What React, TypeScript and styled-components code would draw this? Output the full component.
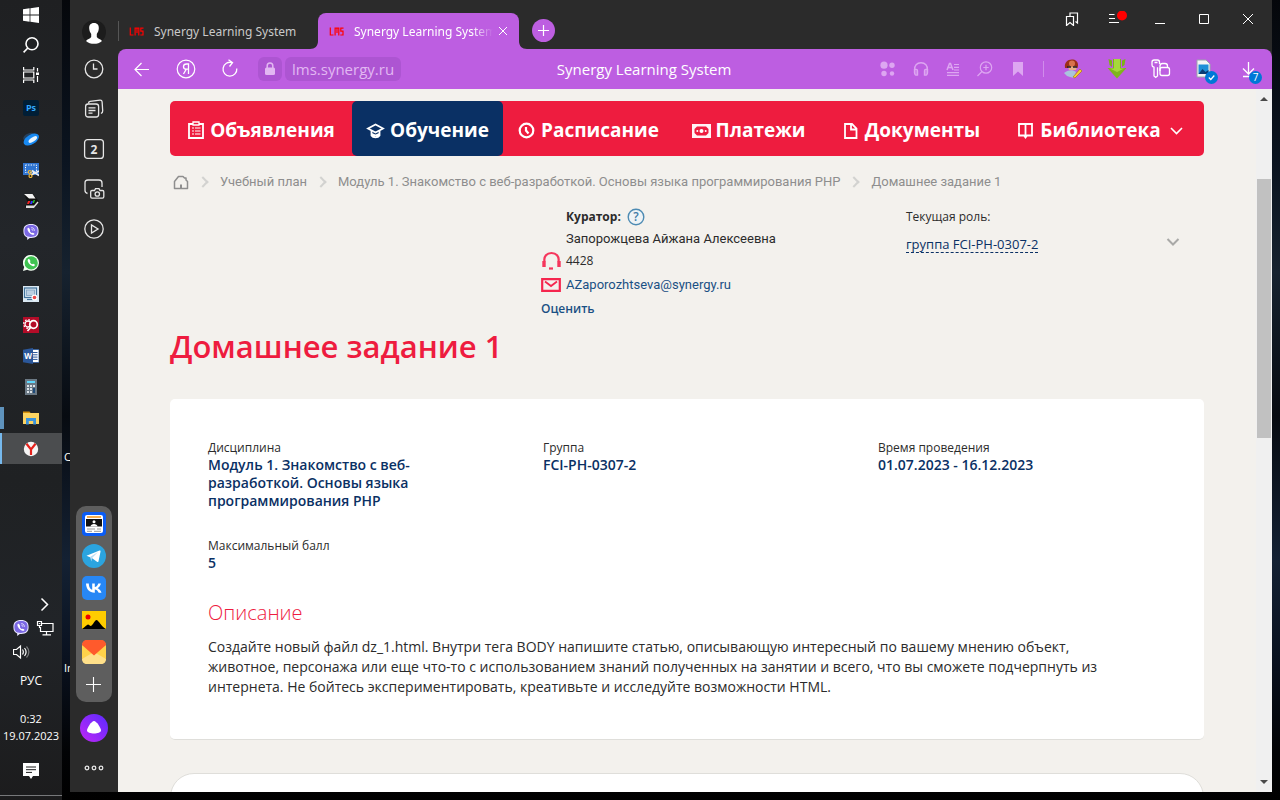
import React from "react";
import styled, { createGlobalStyle, css } from "styled-components";

const chrome = `"Noto Sans", "Open Sans", sans-serif`;
const ui = `"Open Sans", "Noto Sans", sans-serif`;
const compact = `Roboto, "Open Sans", sans-serif`;

const GlobalStyle = createGlobalStyle`
  *, *::before, *::after { box-sizing: border-box; }
  html, body { margin: 0; padding: 0; background: #05070b; }
  body { font-family: ${ui}; color: #2b2b2b; }
  button { font: inherit; color: inherit; background: none; border: 0; padding: 0; margin: 0; }
  a { color: inherit; text-decoration: none; }
  h1, h2, p, dl, dt, dd, ul, ol { margin: 0; padding: 0; font-weight: inherit; list-style: none; }
  svg { display: block; flex: none; }
`;

/* ---------- desktop ---------- */

const Desktop = styled.div`
  display: flex;
  height: 100vh;
  min-height: 640px;
  background: linear-gradient(#05070b 0%, #0b1420 20%, #16222f 34%, #070b11 52%, #142133 70%, #0a1220 82%, #020305 94%, #000 100%);
  overflow: hidden;
`;

const Taskbar = styled.aside`
  display: flex;
  flex-direction: column;
  flex: none;
  width: 62px;
  background: linear-gradient(#1f2022, #23262a 30%, #1f2123 60%, #212428 78%, #1c1c1d);
  color: #fff;
`;

const TaskGroup = styled.div<{ $gap?: number }>`
  display: flex;
  flex-direction: column;
  margin-bottom: ${(p) => p.$gap ?? 0}px;
`;

const TaskButton = styled.button<{ $state?: "open" | "active"; $small?: boolean }>`
  display: flex;
  align-items: center;
  justify-content: center;
  height: ${(p) => (p.$small ? 30 : 31)}px;
  ${(p) => p.$state === "open" && css`
    background: linear-gradient(to right, #5f93bd 4px, transparent 4px) 0 50% / 100% 22px no-repeat;
  `}
  ${(p) => p.$state === "active" && css`
    background: linear-gradient(to right, #76b9ed 2px, #4b4d4f 2px);
  `}
`;

const Tray = styled.div`
  display: flex;
  flex-direction: column;
  margin-top: auto;
  height: 204px;
  border-bottom: 1px solid #77787a;
  margin-bottom: 4px;
`;

const TrayRow = styled.div`
  display: grid;
  grid-template-columns: 16px 18px;
  column-gap: 7px;
  height: 24px;
  padding-left: 13px;
  align-items: center;
`;

const TrayText = styled.button`
  font-size: 11px;
  line-height: 17px;
  text-align: center;
  white-space: nowrap;
`;

const Clock = styled(TrayText)`
  margin-top: 21px;
  span { display: block; }
`;

const Language = styled(TrayText)`
  margin-top: 8px;
  font-size: 12px;
`;

const Notice = styled.button`
  display: flex;
  justify-content: center;
  margin-top: 19px;
`;

const Wallpaper = styled.div`
  position: relative;
  flex: none;
  width: 8px;
  overflow: hidden;
  color: #fff;
  font-size: 11px;
`;

const ShortcutLabel = styled.span<{ $y: number }>`
  position: absolute;
  left: 2px;
  top: ${(p) => p.$y}px;
  white-space: nowrap;
`;

const BrowserWindow = styled.div`
  display: grid;
  grid-template-columns: 48px minmax(0, 1fr);
  flex: 1;
  min-width: 0;
  margin: 0 8px 8px 0;
  background: #2b2b2b;
`;

/* ---------- browser side panel ---------- */

const SidePanel = styled.aside`
  display: flex;
  flex-direction: column;
  align-items: center;
  padding: 20px 0 12px;
`;

const SideButton = styled.button`
  display: flex;
  align-items: center;
  justify-content: center;
  width: 36px;
  height: 40px;
  color: #e6e6e6;
`;

const Avatar = styled.button`
  width: 24px;
  height: 24px;
  margin-bottom: 5px;
`;

const Dock = styled.div`
  display: flex;
  flex-direction: column;
  align-items: center;
  gap: 8px;
  width: 36px;
  margin-top: auto;
  padding: 6px 0;
  border-radius: 10px;
  background: #5e5e5e;
  color: #fff;
`;

const Alice = styled.button`
  width: 28px;
  height: 28px;
  margin: 12px 0 14px;
`;

const More = styled.button`
  height: 24px;
`;

/* ---------- browser main column ---------- */

const Main = styled.div`
  display: flex;
  flex-direction: column;
  min-width: 0;
  min-height: 0;
`;

const TabBar = styled.header`
  display: flex;
  align-items: flex-end;
  height: 49px;
  flex: none;
  color: #fff;
`;

const Tab = styled.div<{ $active?: boolean }>`
  position: relative;
  display: flex;
  align-items: center;
  width: ${(p) => (p.$active ? 201 : 200)}px;
  height: 36px;
  padding: 0 11px;
  gap: 10px;
  border-radius: 8px 8px 0 0;
  background: ${(p) => (p.$active ? "#bd5ee1" : "transparent")};
  color: ${(p) => (p.$active ? "#fff" : "#c9c9c9")};
`;

const TabDivider = styled.div`
  width: 1px;
  height: 20px;
  margin: 0 -1px 8px 0;
  background: #565656;
`;

const Flare = styled.svg<{ $right?: boolean }>`
  position: absolute;
  bottom: 0;
  ${(p) => (p.$right ? "left: 100%; transform: scaleX(-1);" : "right: 100%;")}
`;

const TabTitle = styled.button<{ $fade?: boolean }>`
  flex: 1;
  overflow: hidden;
  text-align: left;
  white-space: nowrap;
  font-family: ${chrome};
  font-size: 12px;
  line-height: 20px;
  padding-top: 1px;
  ${(p) => p.$fade && css`mask-image: linear-gradient(to right, #000 85%, transparent 100%);`}
`;

const TabClose = styled.button`
  margin-left: -5px;
`;

const NewTab = styled.button`
  display: flex;
  align-items: center;
  justify-content: center;
  width: 23px;
  height: 23px;
  margin: 0 0 7px 13px;
  border-radius: 50%;
  background: #bd5ee1;
`;

const WindowControls = styled.div`
  display: flex;
  align-items: center;
  align-self: flex-start;
  height: 38px;
  margin-left: auto;
  padding-right: 2px;
`;

const ControlButton = styled.button`
  display: flex;
  align-items: center;
  justify-content: center;
  width: 44px;
  height: 38px;
`;

const Toolbar = styled.div`
  display: flex;
  align-items: center;
  flex: none;
  height: 40px;
  padding: 0 1px 0 14px;
  border-radius: 8px 8px 0 0;
  background: #bd5ee1;
  color: #fff;
`;

const NavButtons = styled.div`
  display: flex;
  align-items: center;
  gap: 24px;
  margin-right: 18px;
`;

const Chip = styled.button`
  display: flex;
  align-items: center;
  justify-content: center;
  height: 24px;
  min-width: 24px;
  margin-right: 3px;
  padding: 0 7px;
  border-radius: 6px;
  background: #ad55d2;
  color: #e2b8f2;
  font-size: 15px;
  line-height: 24px;
`;

const PageTitle = styled.div`
  flex: 1;
  text-align: center;
  white-space: nowrap;
  overflow: hidden;
  font-size: 15px;
  line-height: 24px;
  padding-left: 4px;
`;

const PageTools = styled.div`
  display: flex;
  align-items: center;
  gap: 17px;
  color: #dda6f1;
`;

const ToolDivider = styled.div`
  width: 1px;
  height: 16px;
  margin-right: 7px;
  background: #d08ceb;
`;

const Extensions = styled.div`
  display: flex;
  align-items: center;
  color: #fff;
`;

const ExtensionButton = styled.button`
  position: relative;
  display: flex;
  align-items: center;
  justify-content: center;
  width: 44px;
  height: 30px;
`;

const Badge = styled.span`
  position: absolute;
  right: 9px;
  bottom: 0;
  display: flex;
  align-items: center;
  justify-content: center;
  width: 13px;
  height: 13px;
  border-radius: 50%;
  background: #0078d7;
  color: #fff;
  font-size: 10px;
  line-height: 13px;
`;

const Viewport = styled.div`
  display: flex;
  flex: 1;
  min-height: 0;
  background: #f3f1ed;
`;

const Page = styled.main`
  flex: 1;
  min-width: 0;
  padding: 12px 52px 0;
  overflow: hidden;
`;

const ScrollTrack = styled.div`
  display: flex;
  flex-direction: column;
  align-items: center;
  width: 16px;
  padding: 7px 0;
  background: #f0f0f0;
`;

const ScrollThumb = styled.div`
  width: 14px;
  height: 259px;
  margin: 77px 0 auto;
  background: #c1c1c1;
`;

/* ---------- page ---------- */

const Menu = styled.nav`
  display: grid;
  grid-template-columns: 182fr 151fr 171fr 149fr 176fr 205fr;
  height: 55px;
  border-radius: 5px;
  background: #ee1c3f;
`;

const MenuLink = styled.a<{ $active?: boolean }>`
  display: flex;
  align-items: center;
  justify-content: center;
  gap: 5px;
  padding-top: 2px;
  border-radius: 5px;
  background: ${(p) => (p.$active ? "#0a3064" : "transparent")};
  color: #fff;
  font-size: 19px;
  font-weight: 700;
  line-height: 28px;
  white-space: nowrap;
`;

const Crumbs = styled.ol`
  display: flex;
  align-items: center;
  height: 20px;
  margin-top: 16px;
  padding-left: 3px;
  color: #8e8e8e;
  font-family: ${compact};
  font-size: 13px;
  line-height: 20px;
  white-space: nowrap;
`;

const Crumb = styled.li`
  display: flex;
  align-items: center;
  &:not(:last-child)::after {
    content: "";
    width: 8px;
    height: 8px;
    margin: 0 13px 0 10px;
    border: solid #d2d2d0;
    border-width: 2px 2px 0 0;
    transform: rotate(45deg);
  }
`;

const InfoRow = styled.section`
  display: grid;
  grid-template-columns: 371fr 365fr 298fr;
  height: 114px;
  margin-top: 14px;
  font-size: 12px;
  line-height: 22px;
`;

const Curator = styled.div`
  grid-column: 2;
  display: grid;
  grid-template-columns: 20px 1fr;
  grid-template-rows: 22px 22px 22px 25px 24px;
  column-gap: 5px;
  align-items: center;
  align-content: start;
  white-space: nowrap;
`;

const CuratorLabel = styled.div`
  grid-column: 2;
  display: flex;
  align-items: center;
  gap: 6px;
  font-weight: 700;
`;

const CuratorValue = styled.div`
  grid-column: 2;
  font-family: ${compact};
  font-size: 13px;
`;

const MailLink = styled.a`
  color: #1a5084;
  font-family: ${compact};
  font-size: 13px;
`;

const RateLink = styled.a`
  grid-column: 1 / -1;
  color: #1a5084;
  font-weight: 600;
`;

const Role = styled.div`
  display: grid;
  grid-template-columns: 1fr 14px;
  align-content: start;
  align-items: start;
  row-gap: 8px;
  padding-right: 24px;
`;

const RoleCaption = styled.div`
  grid-column: 1 / -1;
`;

const RoleLink = styled.a`
  justify-self: start;
  border-bottom: 1px dashed #0a3064;
  color: #0a3064;
  font-size: 13px;
  line-height: 16px;
`;

const Title = styled.h1`
  margin-top: 2px;
  color: #ee1c3f;
  font-size: 31px;
  font-weight: 600;
  line-height: 48px;
`;

const Card = styled.section`
  margin-top: 29px;
  padding: 40px 38px 42px;
  border-bottom: 1px solid #dfdeda;
  border-radius: 5px;
  background: #fff;
`;

const Facts = styled.dl`
  display: grid;
  grid-template-columns: repeat(3, 1fr);
  column-gap: 47px;
  row-gap: 27px;
`;

const FactName = styled.dt`
  color: #2b2b2b;
  font-size: 12px;
  line-height: 17px;
`;

const FactValue = styled.dd`
  max-width: 240px;
  color: #0a3064;
  font-size: 14px;
  font-weight: 600;
  line-height: 18px;
`;

const Subtitle = styled.h2`
  margin-top: 26px;
  color: #ee1c3f;
  font-size: 20px;
  font-weight: 300;
  line-height: 30px;
`;

const Description = styled.p`
  margin-top: 9px;
  padding-right: 32px;
  font-size: 14px;
  line-height: 20px;
`;

const NextCard = styled.section`
  height: 120px;
  margin-top: 33px;
  border: 1px solid #dfdeda;
  border-radius: 24px;
  background: #fff;
`;

/* ---------- icons ---------- */

type IconProps = { w?: number; h?: number; box?: string; sw?: number; children: React.ReactNode };
const Line = ({ w = 20, h = w, box, sw = 1.2, children }: IconProps) => (
  <svg width={w} height={h} viewBox={box ?? `0 0 ${w} ${h}`} fill="none" stroke="currentColor" strokeWidth={sw} aria-hidden="true">
    {children}
  </svg>
);
const Pic = ({ w = 16, h = w, box, children }: IconProps) => (
  <svg width={w} height={h} viewBox={box ?? `0 0 ${w} ${h}`} aria-hidden="true">{children}</svg>
);

const ViberIcon = () => (
  <Pic>
    <path d="M8 0C3 0 .4 2 .4 7c0 3.600 1.300 5.600 3.800 6.500V16l2.600-2.100c6 .4 8.800-1.600 8.800-6.900C15.600 2 13 0 8 0z" fill="#e9e6ff" />
    <path d="M8 1C3.600 1 1.400 2.700 1.400 7s2 5.900 6.200 5.900C12 12.900 14.600 11.500 14.600 7S12.400 1 8 1z" fill="#7b68e4" />
    <path d="M5 3.700c-1.400 1 .2 4 1.600 5.300 1.400 1.400 3.800 2.600 4.800 1.200.4-.7-1.600-2-2.200-1.300-.6.7-2.800-1.500-2.200-2.100.7-.6-1-3.500-2-3.100z" fill="#fff" />
    <path d="M8.300 3.600c2 .1 3 1.200 3.100 3.200M8.500 5.200c.8.100 1.200.6 1.300 1.400" fill="none" stroke="#fff" strokeWidth=".8" />
  </Pic>
);

const systemIcons = [
  { name: "Пуск", icon: <Pic><path d="M0 2.200 6.600 1.300V7.600H0zM7.400 1.200 16 0V7.600H7.400zM0 8.400H6.600V14.700L0 13.800zM7.400 8.400H16V16L7.400 14.800z" fill="#fff" /></Pic> },
  { name: "Поиск", icon: <Line w={16} sw={1.6}><circle cx="9" cy="6.800" r="6" /><path d="M4.800 11 .6 15.400" /></Line> },
  { name: "Представление задач", icon: <Line w={16} sw={1.2}><path d="M.6 0v3h10.200V0M.6 16v-3h10.200v3M.6 5h10.200v6H.6zM14.500 1v3.500M14.500 9v6" /><path d="M13 5.500h3v2.500h-3z" fill="#fff" stroke="none" /></Line> },
];

const appIcons: { name: string; icon: React.ReactNode; state?: "open" | "active" }[] = [
  { name: "Photoshop", icon: <Pic><rect width="16" height="16" rx="2" fill="#001e36" /><text x="8" y="11.300" textAnchor="middle" fontFamily="Open Sans" fontWeight="700" fontSize="9" fill="#31a8ff">Ps</text></Pic> },
  { name: "Яндекс Диск", icon: <Pic><ellipse cx="6.500" cy="6" rx="6.500" ry="3.800" transform="rotate(-20 6.500 6)" fill="#24405e" /><ellipse cx="8.300" cy="8.500" rx="8.500" ry="4.800" transform="rotate(-32 8.300 8.500)" fill="#1789f2" /><ellipse cx="9.800" cy="8.500" rx="5" ry="2" transform="rotate(-35 9.800 8.500)" fill="#e8f5ff" /></Pic> },
  { name: "Ножницы", icon: <Pic><rect width="16" height="12" y="1" fill="#2f74d0" /><rect x="2.500" y="3" width="11" height="7.500" fill="none" stroke="#fff" strokeDasharray="1.300 1.300" /><path d="m8 13 8-4M9 8.500l7 5" stroke="#e8edf3" strokeWidth="1.700" /><circle cx="6.800" cy="10" r="1.500" fill="none" stroke="#f2b632" strokeWidth="1.200" /><circle cx="7.500" cy="14" r="1.500" fill="none" stroke="#f2b632" strokeWidth="1.200" /></Pic> },
  { name: "Сканер", icon: <Pic><path d="M1 1h9l6 7.500-5 6.500H3l-1-2 3-3z" fill="#111" /><path d="M1 1h8.500l3 4.500H6z" fill="#f2f2f2" /><path d="M3 12.500h8l3.500-4 1 1L11 15H3z" fill="#ddd" /><path d="M5 8h2.500L6 11H4z" fill="#e22" /><path d="M8 8h2l-1 3H7z" fill="#33f" /><path d="M10.500 7H12l-1 3H9.500z" fill="#2c2" /></Pic> },
  { name: "Viber", icon: <ViberIcon /> },
  { name: "WhatsApp", icon: <Pic><path d="M8.200 0A7.700 7.700 0 0 1 8 15.700a8 8 0 0 1-3.700-.9L0 16l1.200-4A7.800 7.800 0 0 1 8.200 0z" fill="#f4fff4" /><circle cx="8.200" cy="7.900" r="6.600" fill="#3fc351" /><path d="M5.200 4.200c-1.300 1 0 3.500 1.500 5s3.800 2.700 5 1.400c.8-1-1.500-2.200-2-1.600-.7.800-3.200-1.600-2.500-2.300.8-.7-1-3.100-2-2.500z" fill="#fff" /></Pic> },
  { name: "Запись экрана", icon: <Pic><rect width="16" height="16" fill="#dbe9f3" /><rect x="1.500" y="2" width="12" height="9.500" fill="none" stroke="#41729b" strokeWidth="1.200" /><rect x="3.500" y="4" width="8" height="5.500" fill="#bcd0e2" stroke="#7d9fbd" strokeWidth=".8" /><path d="M4 13.500h6" stroke="#41729b" strokeWidth="1.200" /><circle cx="11.500" cy="11.500" r="3" fill="#fff" /><circle cx="11.500" cy="11.500" r="1.800" fill="#e84848" /></Pic> },
  { name: "Настройка", icon: <Pic><rect width="16" height="16" fill="#b30c28" /><circle cx="5" cy="7" r="3" fill="none" stroke="#fff" strokeWidth="1.300" /><circle cx="5" cy="7" r="4.300" fill="none" stroke="#fff" strokeWidth="1.400" strokeDasharray="1.500 1.850" /><circle cx="10.500" cy="7.500" r="3.800" fill="#b30c28" stroke="#fff" strokeWidth="1.700" /><path d="m8 10-3.500 4" stroke="#fff" strokeWidth="1.700" /></Pic> },
  { name: "Word", icon: <Pic><rect x="8" y="1.500" width="8" height="13" fill="#fff" stroke="#2b579a" strokeWidth=".8" /><path d="M10 4.500h4.500M10 6.800h4.500M10 9.100h4.500M10 11.400h4.500" stroke="#2b579a" /><path d="M0 1.700 10 0v16L0 14.300z" fill="#2b579a" /><text x="5" y="11" textAnchor="middle" fontFamily="Open Sans" fontWeight="700" fontSize="8" fill="#fff">W</text></Pic> },
  { name: "Калькулятор", icon: <Pic><rect x="2" width="12" height="16" fill="#6b7985" /><rect x="4" y="2" width="8" height="2" fill="#5fd7fb" /><g fill="#dbe2e8"><path d="M4 6h2v2H4zM7 6h2v2H7zM10 6h2v2h-2zM4 9h2v2H4zM7 9h2v2H7zM4 12h2v2H4zM7 12h2v2H7z" /></g><path d="M10 9h2v5h-2z" fill="#1f4a78" /></Pic> },
  { name: "Проводник", state: "open", icon: <Pic><path d="M0 1.500h6.500l1.500 2H0z" fill="#d7920b" /><path d="M0 3h16v11H0z" fill="#fcd462" /><path d="M3 8h10v6.500h-2.800V11H5.800v3.500H3z" fill="#3b93dc" /></Pic> },
  { name: "Яндекс Браузер", state: "active", icon: <Pic><circle cx="8" cy="8" r="7.200" fill="#f5f5f5" /><path d="M3.500 2.800 8 8.500l4.500-5.700M8 8v6" fill="none" stroke="#e3211c" strokeWidth="2.200" /></Pic> },
];

const sideIcons = [
  { name: "История", icon: <Line w={20} sw={1.3}><circle cx="10" cy="10" r="8.800" /><path d="M9.500 4.500v5.500h4" /></Line> },
  { name: "Коллекции", icon: <Line w={20} sw={1.3}><rect x="1.600" y="5" width="13" height="13" rx="2.500" /><path d="M4.500 4.500C4.500 3 5 2.500 6 2.400l10-1.200c1.500-.1 2 .6 2.100 1.600l.6 9c.1 1.500-.6 2.300-1.800 2.700M4.500 8.800h7M4.500 11.500h7M4.500 14.200h4" /></Line> },
  { name: "Вкладки", icon: <svg width="22" height="22" viewBox="0 0 22 22" aria-hidden="true"><rect x="1.600" y="1.600" width="18.800" height="18.800" rx="3" fill="none" stroke="currentColor" strokeWidth="1.300" /><text x="11" y="15.500" textAnchor="middle" fontFamily="Open Sans" fontWeight="700" fontSize="12" fill="currentColor">2</text></svg> },
  { name: "Скриншот", icon: <Line w={22} sw={1.300}><path d="M4.500 15.500C2.500 15 2 14.500 2 12.500V5c0-2 .8-3 3-3h11c2.200 0 3 1 3 3v4" /><path d="M9 12.500h2.500l1-1.800h3.500l1 1.800h2.500c.9 0 1.300.5 1.300 1.300v5c0 .8-.4 1.300-1.300 1.300H9c-.9 0-1.300-.5-1.300-1.300v-5c0-.8.4-1.300 1.300-1.300z" /><circle cx="14.300" cy="16" r="2.200" /></Line> },
  { name: "Видео", icon: <Line w={20} sw={1.3}><circle cx="10" cy="10" r="9.200" /><path d="M7.500 6v8l6.500-4z" /></Line> },
];

const dockIcons = [
  { name: "Новости", icon: <Pic w={24}><rect width="24" height="24" rx="4" fill="#0a5cf5" /><rect x="3" y="3" width="18" height="18" rx="2" fill="#fff" /><path d="M5 5h14" stroke="#f59a23" strokeWidth="1.600" /><rect x="4" y="7" width="16" height="7.500" fill="#111" /><circle cx="12" cy="9.800" r="1.500" fill="#fff" /><path d="M8.500 14.500c0-3.500 7-3.500 7 0z" fill="#fff" /><path d="M5 17h8M15 17h4M5 19.300h5M12 19.300h7" stroke="#999" /></Pic> },
  { name: "Telegram", icon: <Pic w={24}><circle cx="12" cy="12" r="12" fill="#2ba4df" /><path d="m4.500 11.800 13-5.300c.8-.2 1.200.2 1 1.200l-2 9.500c-.2.900-.8 1-1.500.6l-5.200-3.900z" fill="#fff" /><path d="m8 13 8-5-6 6-.6 3.500z" fill="#b9ddf3" /></Pic> },
  { name: "ВКонтакте", icon: <Pic w={24}><rect width="24" height="24" rx="5" fill="#2787f5" /><path d="M12.700 16.800c-5.400 0-8.500-3.500-8.700-9.200h2.800c.1 4.100 2 5.900 3.400 6.200V7.600h2.600v3.500c1.500-.1 3-1.700 3.500-3.500h2.600c-.4 2.300-2.100 4-3.300 4.700 1.200.6 3.200 2.100 3.900 4.500h-2.800c-.6-1.800-2.100-3.200-3.900-3.400v3.400z" fill="#fff" /></Pic> },
  { name: "Картинки", icon: <Pic w={24}><path d="M0 3h24v18H0z" fill="#fc0" /><path d="M0 21c3-2 5-4.500 6-4.500s2 1.700 3 1.500c1.500-.5 4-6 5.500-6 2 0 5 7 9.500 9z" fill="#000" /><circle cx="6" cy="9" r="2.500" fill="#e00" /></Pic> },
  { name: "Почта", icon: <Pic w={24}><rect width="24" height="24" rx="6" fill="#ffd24a" /><path d="M0 19 12 12l12 7c0 3-2 5-5 5H5c-3 0-5-2-5-5z" fill="#ffe08a" /><path d="M0 5c0-3 2-5 5-5h14c3 0 5 2 5 5L12 15.500z" fill="#ff5a2c" /></Pic> },
  { name: "Добавить", icon: <Line w={24} sw={1.1}><path d="M11.500 5v15M4 12.500h15" /></Line> },
];

const LmsIcon = () => (
  <svg width="15" height="9" viewBox="0 0 15 9" fill="none" stroke="#f00" strokeWidth="1.200" aria-hidden="true">
    <path d="M1.300.5v7.500h3.200M6.100 8.500V1.100h3.700v7.400M8 1.500v4.500M14.500 1.100h-2.700v3h2.200V8h-2.700" />
  </svg>
);

const pageTools = [
  <Pic key="a" w={16}><g fill="currentColor"><circle cx="4" cy="4.200" r="3.600" /><circle cx="12" cy="4.200" r="2.700" /><circle cx="4" cy="12.500" r="2.700" /><circle cx="12" cy="12.500" r="2.200" /></g></Pic>,
  <Line key="b" w={16} h={18} sw={1.400}><path d="M1.700 10C1 5.500 4 2.700 8 2.700s7 2.800 6.300 7.300" /><path d="M1.500 9.500c2.500-.5 3 0 3 1.500v4c-2 .5-3-.5-3-2.500zM14.500 9.500c-2.500-.5-3 0-3 1.500v4c2 .5 3-.5 3-2.500z" fill="currentColor" fillOpacity=".5" /></Line>,
  <Line key="c" w={14} sw={1.200}><path d="M8 2.500h5M8 5.300h5M8 8h5M1 10.700h12M1 13.300h12" /><path d="M1 8 3.500 1.500h1L7 8M2.500 5.500h3.500" strokeWidth="1.500" /></Line>,
  <Line key="d" w={16} sw={1.200}><circle cx="9" cy="6.500" r="5.700" /><path d="m5 10.500-4.500 4.500M9 3.800v5.400M6.300 6.500h5.400" /></Line>,
  <Pic key="e" w={16}><path d="M3 1h10v14l-5-4.500L3 15z" fill="currentColor" /></Pic>,
];

const extensions: { name: string; icon: React.ReactNode; badge?: React.ReactNode }[] = [
  { name: "Редактор", icon: <Pic w={20}><path d="M2 9c-1-6 3-9 8-8.500 4 .5 6 4 4.500 8.500z" fill="#9c2e17" /><circle cx="9" cy="4.500" r="3" fill="#d8734c" /><path d="M5 7.500h9l-1 3.500H6z" fill="#e6b088" /><path d="M4 8h4M10 8h4" stroke="#222" strokeWidth="1.500" /><path d="M1 14c3-3 9-4 12-1l-2 6-4-1-3-1z" fill="#a9c4dc" /><path d="m10 18 7-8 2 2-7 7z" fill="#f6d02f" stroke="#9a6b12" strokeWidth=".6" /></Pic> },
  { name: "Скачать", icon: <Pic w={20}><path d="M6 0h8v9h5.500L10 19.500.5 9H6z" fill="#7fb51d" /><path d="M1.500 0 5 1.500V8L2.500 6zM18.500 0 15 1.500V8l2.500-2z" fill="#7ab317" /><path d="M7 0h6v9.500h4L10 13 3 9.500h4z" fill="#a6d83c" /></Pic> },
  { name: "Пароли", icon: <Line w={20} sw={1.300}><path d="M8.500 5V3.200C8.500 1.800 7.800 1 6.500 1H3.200C1.800 1 1 1.800 1 3.200V6c0 1.300.8 2 2 2.200V17l1.700 1.500L6.500 17V8.300M3.500 3.500h3" /><rect x="9" y="8.500" width="9.500" height="8" rx="2" /><path d="M9 12V7c0-1.600.8-2.500 2.500-2.500h2.500c1.600 0 2.500.9 2.500 2.500v1.500" /></Line> },
  { name: "Файл", icon: <Pic w={20}><path d="M2 1h9l4 4v13H2z" fill="#f5f5f5" stroke="#9aa5ad" /><rect x="3.500" y="5.500" width="10" height="9.500" fill="#1e90d8" /><path d="m3.500 15 4-5 3 3 3-2v4z" fill="#0b3c74" /></Pic>, badge: <svg width="7" height="7" viewBox="0 0 7 7"><path d="m.8 3.500 2 2 3.500-4" fill="none" stroke="#fff" strokeWidth="1.200" /></svg> },
  { name: "Загрузки", icon: <Line w={18} sw={1.300}><path d="M8.500 2v12M3 8.500 8.500 14l5.500-5.500M3 16.500h7" /></Line>, badge: "7" },
];

const menu = [
  { label: "Объявления", icon: <Line w={18} sw={1.800}><path d="M2 3h14v14H2z" /><path d="M6 1h6v3H6z" fill="#ee1c3f" strokeWidth="1.300" /><path d="M5 7h2M8 7h5.500M5 10h2M8 10h5.500M5 13h2M8 13h5.500" strokeWidth="1.200" /></Line> },
  { label: "Обучение", active: true, icon: <Line w={19} h={18} sw={1.800}><path d="m2 7.500 7.500-4 7.500 4-7.500 4z" /><path d="M5.500 9.500v5c1.500 2.500 6.500 2.500 8 0v-5M6 13c2 1.500 5 1.500 7 0" /></Line> },
  { label: "Расписание", icon: <Line w={18} sw={2.2}><circle cx="8.500" cy="9.500" r="6.800" /><path d="M8 6V9.500l2.500 3" /></Line> },
  { label: "Платежи", icon: <Pic w={19} h={18}><path d="M0 3h19v14H0z" fill="#fff" opacity=".95" /><path d="M2.500 8 5 5.500h9L16.500 8v4L14 14.500H5L2.500 12z" fill="#ee1c3f" /><circle cx="9.500" cy="10" r="2" fill="#fff" /><circle cx="5.300" cy="10" r="1" fill="#fff" /><circle cx="13.700" cy="10" r="1" fill="#fff" /></Pic> },
  { label: "Документы", icon: <Line w={18} sw={1.800}><path d="M3 3h7l4.500 4.500V17H3zM9 3v5.500h5" /></Line> },
  { label: "Библиотека", more: true, icon: <Line w={18} sw={1.800}><path d="M8.500 3v12.500M8.500 3H2v11.500h5l1.500 2 1.500-2h5V3z" /></Line> },
];

const facts = [
  { name: "Дисциплина", value: "Модуль 1. Знакомство с веб-разработкой. Основы языка программирования PHP" },
  { name: "Группа", value: "FCI-PH-0307-2" },
  { name: "Время проведения", value: "01.07.2023 - 16.12.2023" },
  { name: "Максимальный балл", value: "5" },
];

export default function App() {
  return (
    <>
      <GlobalStyle />
      <Desktop>
        <Taskbar>
          <TaskGroup $gap={2}>
            {systemIcons.map((s) => <TaskButton key={s.name} aria-label={s.name} $small>{s.icon}</TaskButton>)}
          </TaskGroup>
          <TaskGroup>
            {appIcons.map((a) => <TaskButton key={a.name} aria-label={a.name} $state={a.state}>{a.icon}</TaskButton>)}
          </TaskGroup>
          <Tray>
            <TrayRow>
              <span />
              <Line w={16} sw={1.500}><path d="m5.500 2.500 6 6-6 6" /></Line>
            </TrayRow>
            <TrayRow>
              <ViberIcon />
              <Line w={18} h={16} sw={1.200}><path d="M6 3.500h11v8H4.500V7M10.500 12v2.500M6.500 14.800H15M1.500 1.500h4v4h-4zM3.500 5.500V8M2.800 3.500h1.500" /></Line>
            </TrayRow>
            <TrayRow>
              <Line w={18} h={16} sw={1.200}><path d="M.5 5.500h3L7.500 2v12l-4-3.500h-3zM9.500 5.500c1 1.500 1 3.500 0 5M11.500 4c2 2.500 2 5.500 0 8" /><path d="M13.500 2.500c3 3.500 3 7.500 0 11" opacity=".4" /></Line>
            </TrayRow>
            <Language>РУС</Language>
            <Clock><span>0:32</span><span>19.07.2023</span></Clock>
            <Notice aria-label="Уведомления">
              <Pic><path d="M0 0h16v13H10l-2 3-2-3H0z" fill="#fff" /><path d="M3 4h10M3 6.700h10M3 9.400h6" stroke="#1c1c1d" /></Pic>
            </Notice>
          </Tray>
        </Taskbar>

        <Wallpaper aria-hidden="true">
          <ShortcutLabel $y={449}>C</ShortcutLabel>
          <ShortcutLabel $y={660}>In</ShortcutLabel>
        </Wallpaper>

        <BrowserWindow>
          <SidePanel>
            <Avatar aria-label="Профиль">
              <Pic w={24}><circle cx="12" cy="12" r="12" fill="#1c1c1c" /><path d="M12 3c3.500 0 5 2.300 4.800 5.500-.2 2.500-1 4-2 5.500v3c1.200 2 4 2 5.200 4-2 2-5 2.800-8 2.800s-6-.8-8-2.800c1.200-2 4-2 5.200-4v-3c-1-1.500-1.800-3-2-5.500C7 5.300 8.500 3 12 3z" fill="#fff" /></Pic>
            </Avatar>
            {sideIcons.map((s) => <SideButton key={s.name} aria-label={s.name}>{s.icon}</SideButton>)}
            <Dock>
              {dockIcons.map((d) => <button key={d.name} aria-label={d.name}>{d.icon}</button>)}
            </Dock>
            <Alice aria-label="Алиса">
              <Pic w={28}>
                <defs><linearGradient id="alice" x1="0" y1="1" x2="1" y2="0"><stop stopColor="#c026f5" /><stop offset="1" stopColor="#5a2bff" /></linearGradient></defs>
                <circle cx="14" cy="14" r="14" fill="url(#alice)" />
                <path d="M14 7c2.500 0 7 7 7 9.500 0 2-3.500 3-7 3s-7-1-7-3C7 14 11.500 7 14 7z" fill="#fff" />
              </Pic>
            </Alice>
            <More aria-label="Ещё">
              <svg width="20" height="6" viewBox="0 0 20 6" fill="none" stroke="#e6e6e6" strokeWidth="1.300"><circle cx="3" cy="3" r="1.800" /><circle cx="10" cy="3" r="1.800" /><circle cx="17" cy="3" r="1.800" /></svg>
            </More>
          </SidePanel>

          <Main>
            <TabBar>
              <TabDivider />
              <Tab>
                <LmsIcon />
                <TabTitle>Synergy Learning System</TabTitle>
              </Tab>
              <Tab $active>
                <Flare width="8" height="8"><path d="M8 0v8H0c5 0 8-3 8-8z" fill="#bd5ee1" /></Flare>
                <LmsIcon />
                <TabTitle $fade>Synergy Learning System</TabTitle>
                <TabClose aria-label="Закрыть вкладку"><Line w={10} sw={1}><path d="m1 1 8 8M9 1 1 9" /></Line></TabClose>
                <Flare $right width="8" height="8"><path d="M8 0v8H0c5 0 8-3 8-8z" fill="#bd5ee1" /></Flare>
              </Tab>
              <NewTab aria-label="Новая вкладка"><Line w={13} sw={1.200}><path d="M6.500 1v11M1 6.500h11" /></Line></NewTab>
              <WindowControls>
                <ControlButton aria-label="Закладки"><Line w={14} sw={1.200}><path d="M1.500 4.500h7v9l-3.500-3-3.500 3zM5 4.500V1h7.500v10l-2-1.500" /></Line></ControlButton>
                <ControlButton aria-label="Меню"><Pic w={24} h={16}><path d="M5 3.500h5.500M5 7.500h6M5 11.500h10" stroke="#fff" strokeWidth="1.200" /><circle cx="18" cy="4.500" r="5" fill="#f00" /></Pic></ControlButton>
                <ControlButton aria-label="Свернуть"><Line w={10} sw={1}><path d="M0 9.500h10" /></Line></ControlButton>
                <ControlButton aria-label="Развернуть"><Line w={10} sw={1}><path d="M.5.5h9v9h-9z" /></Line></ControlButton>
                <ControlButton aria-label="Закрыть"><Line w={10} sw={1}><path d="m0 0 10 10M10 0 0 10" /></Line></ControlButton>
              </WindowControls>
            </TabBar>

            <Toolbar>
              <NavButtons>
                <button aria-label="Назад"><Line w={20} sw={1.200}><path d="M17 10.500H3M9.500 4 3 10.500 9.500 17" /></Line></button>
                <button aria-label="Яндекс"><svg width="20" height="20" viewBox="0 0 20 20" fill="none" stroke="currentColor" aria-hidden="true"><circle cx="10" cy="10" r="8.800" strokeWidth="1.200" /><path d="M12.500 15V5h-2C8.500 5 7.500 6 7.500 7.700s1 2.500 3 2.500h2M10.300 10.200 7.500 15" strokeWidth="1.300" /></svg></button>
                <button aria-label="Обновить"><Line w={20} sw={1.300}><path d="M16.800 9.500A6.900 6.900 0 1 1 12 3.600M8.500.8l4 2.900-3 3.800" /></Line></button>
              </NavButtons>
              <Chip aria-label="Защищённое соединение"><Pic w={10} h={14}><path d="M2.200 6V3.800a2.800 2.800 0 0 1 5.600 0V6" fill="none" stroke="currentColor" strokeWidth="1.500" /><rect y="5.500" width="10" height="7.500" rx="1.500" fill="currentColor" /></Pic></Chip>
              <Chip>lms.synergy.ru</Chip>
              <PageTitle>Synergy Learning System</PageTitle>
              <PageTools>
                {pageTools}
                <ToolDivider />
              </PageTools>
              <Extensions>
                {extensions.map((e) => (
                  <ExtensionButton key={e.name} aria-label={e.name}>
                    {e.icon}
                    {e.badge && <Badge>{e.badge}</Badge>}
                  </ExtensionButton>
                ))}
              </Extensions>
            </Toolbar>

            <Viewport>
              <Page>
                <Menu>
                  {menu.map((m) => (
                    <MenuLink key={m.label} href="#" $active={m.active}>
                      {m.icon}
                      {m.label}
                      {m.more && <Line w={20} sw={1.600}><path d="m5 8 5.500 5.500L16 8" /></Line>}
                    </MenuLink>
                  ))}
                </Menu>

                <Crumbs>
                  <Crumb>
                    <a href="#" aria-label="Главная"><Line w={16} sw={1.500}><path d="M1.500 14.500V7.500l4-5h4.500l1.500 1.500h1.500V6l1.500 1.500v7z" strokeLinejoin="round" /><path d="M7 10.500h2v4H7z" fill="currentColor" stroke="none" /></Line></a>
                  </Crumb>
                  <Crumb><a href="#">Учебный план</a></Crumb>
                  <Crumb><a href="#">Модуль 1. Знакомство с веб-разработкой. Основы языка программирования PHP</a></Crumb>
                  <Crumb>Домашнее задание 1</Crumb>
                </Crumbs>

                <InfoRow>
                  <Curator>
                    <CuratorLabel>
                      Куратор:
                      <svg width="18" height="18" viewBox="0 0 18 18" aria-hidden="true"><circle cx="9" cy="9" r="7.800" fill="#eef3f6" stroke="#4d8bb3" strokeWidth="1.400" /><text x="9" y="13.200" textAnchor="middle" fontFamily="Open Sans" fontSize="12" fontWeight="600" fill="#3e7ba6">?</text></svg>
                    </CuratorLabel>
                    <CuratorValue>Запорожцева Айжана Алексеевна</CuratorValue>
                    <Line w={20} sw={2.200}><g stroke="#f5365c"><path d="M3.500 10.500C2.500 5 6 2 10.500 2S18.500 5 17.500 10.500" /><path d="M3 10v6M18 10v6" strokeWidth="3.400" /><path d="M8 17.500h4" /></g></Line>
                    <div>4428</div>
                    <Line w={20} h={16} sw={2.200}><g stroke="#f5264e"><path d="M1.200 2.200h17.600v11.600H1.200z" /><path d="m4 4.500 6 4.500 6-4.500" strokeWidth="1.800" /></g></Line>
                    <MailLink href="mailto:AZaporozhtseva@synergy.ru">AZaporozhtseva@synergy.ru</MailLink>
                    <RateLink href="#">Оценить</RateLink>
                  </Curator>
                  <Role>
                    <RoleCaption>Текущая роль:</RoleCaption>
                    <RoleLink href="#">группа FCI-PH-0307-2</RoleLink>
                    <Line w={14} sw={2}><g stroke="#a9a9a7"><path d="m1.500 3 5.500 5.500L12.500 3" /></g></Line>
                  </Role>
                </InfoRow>

                <Title>Домашнее задание 1</Title>

                <Card>
                  <Facts>
                    {facts.map((f) => (
                      <div key={f.name}>
                        <FactName>{f.name}</FactName>
                        <FactValue>{f.value}</FactValue>
                      </div>
                    ))}
                  </Facts>
                  <Subtitle>Описание</Subtitle>
                  <Description>
                    Создайте новый файл dz_1.html. Внутри тега BODY напишите статью, описывающую интересный по вашему мнению объект, животное, персонажа или еще что-то с использованием знаний полученных на занятии и всего, что вы сможете подчерпнуть из интернета. Не бойтесь экспериментировать, креативьте и исследуйте возможности HTML.
                  </Description>
                </Card>
                <NextCard />
              </Page>
              <ScrollTrack aria-hidden="true">
                <svg width="8" height="6" viewBox="0 0 8 6"><path d="M0 5h8L4 1z" fill="#4a4a4a" /></svg>
                <ScrollThumb />
                <svg width="8" height="6" viewBox="0 0 8 6"><path d="M0 1h8L4 5z" fill="#4a4a4a" /></svg>
              </ScrollTrack>
            </Viewport>
          </Main>
        </BrowserWindow>
      </Desktop>
    </>
  );
}
